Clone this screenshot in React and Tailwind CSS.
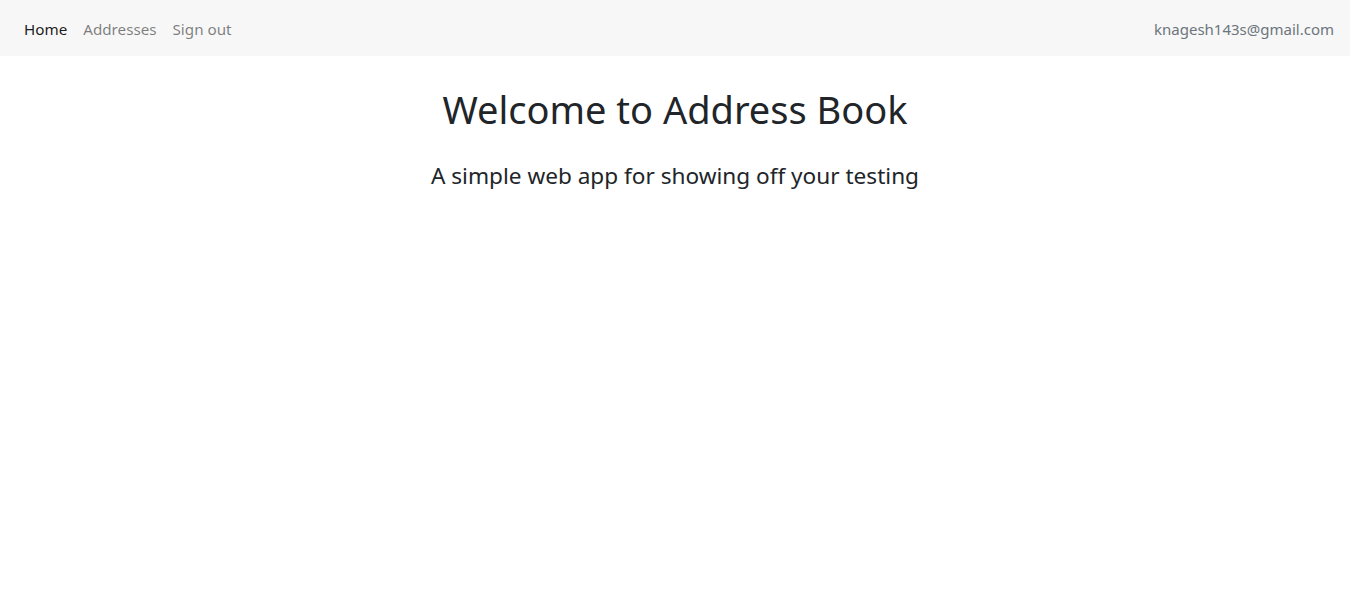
import React from 'react';

function App() {
  return (
    <div className="min-h-screen bg-white text-[#212529]" style={{ fontFamily: '"Noto Sans", "Open Sans", sans-serif' }}>
      <nav className="flex h-14 items-center justify-between bg-[#f7f7f7] px-4 pt-[3px]">
        <div className="flex items-center text-[15.2px]">
          <a href="#" className="px-2 text-black/90">Home</a>
          <a href="#" className="px-2 text-black/50">Addresses</a>
          <a href="#" className="px-2 text-black/50">Sign out</a>
        </div>
        <span className="text-[15px] text-[#6c757d]">knagesh143s@gmail.com</span>
      </nav>

      <div className="mt-[31px] text-center">
        <h1 className="text-[38px] leading-[1.2]">Welcome to Address Book</h1>
        <h3 className="mt-[29px] text-[22.6px] leading-[1.2]">A simple web app for showing off your testing</h3>
      </div>
    </div>
  );
}

export default App;
